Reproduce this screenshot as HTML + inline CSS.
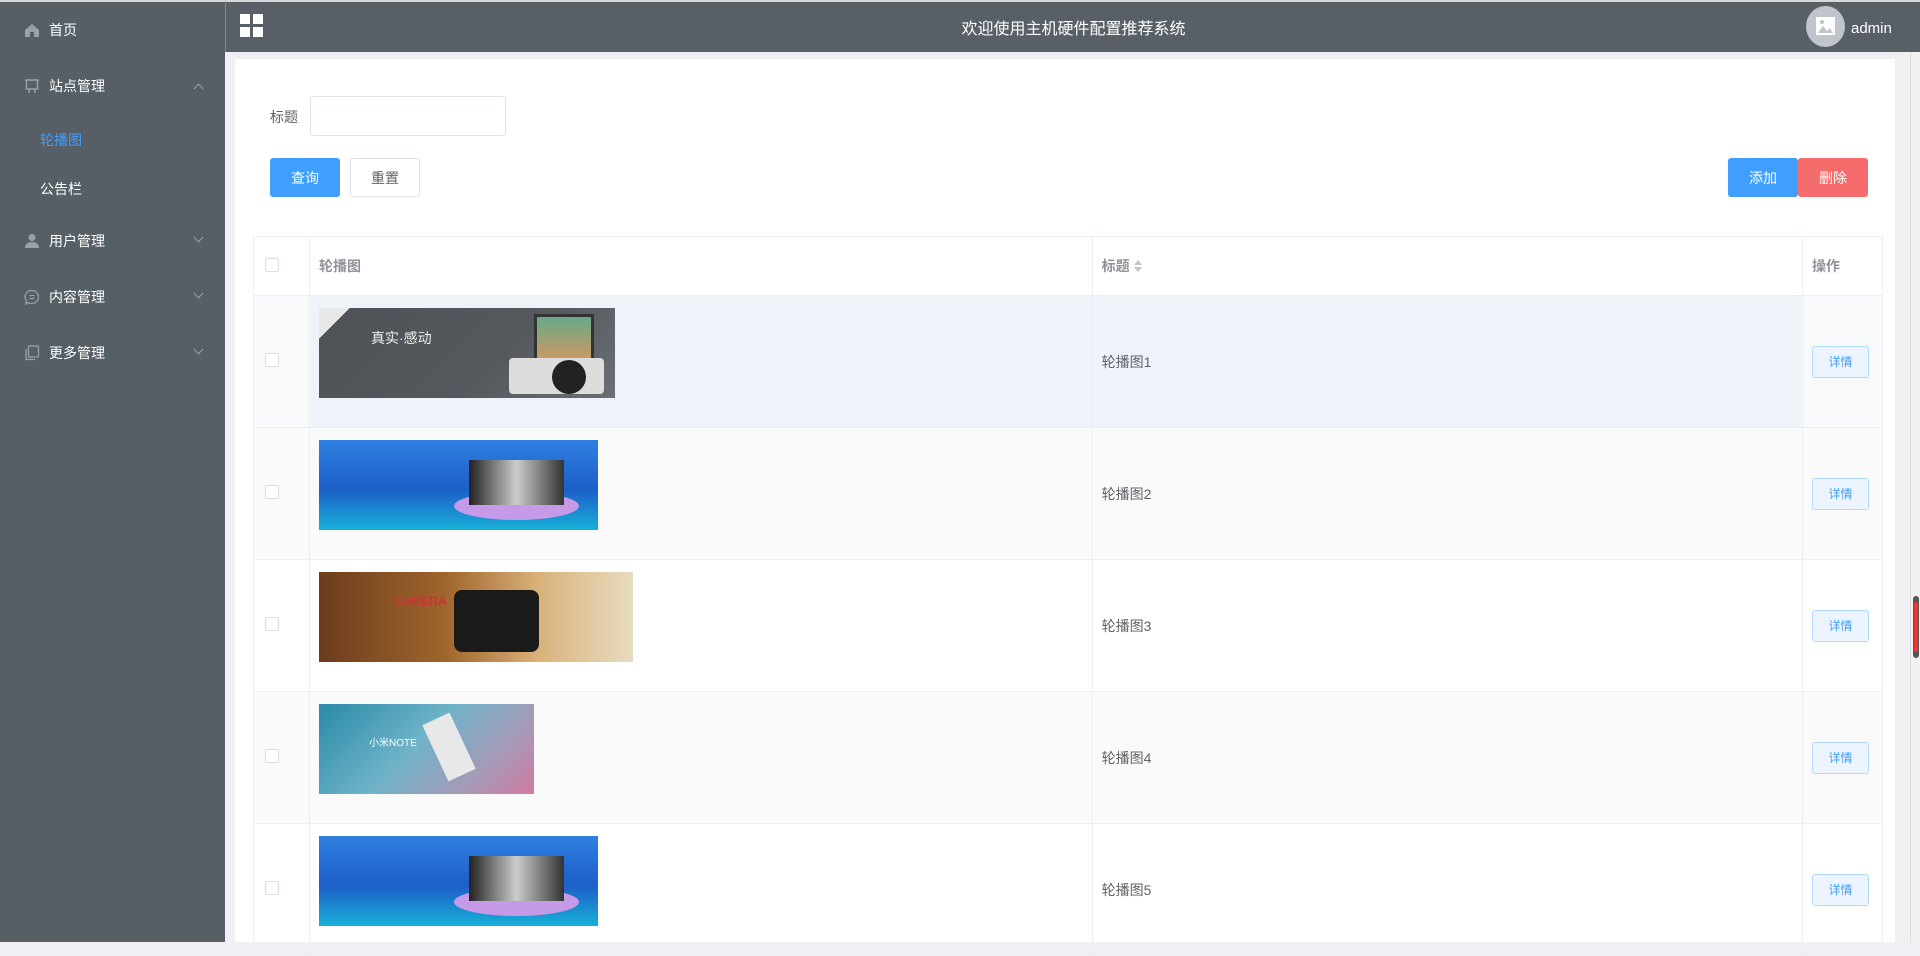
<!DOCTYPE html>
<html><head><meta charset="utf-8"><style>
*{box-sizing:border-box;margin:0;padding:0}
body{width:1920px;height:942px;overflow:hidden;background:#f0f0f4;font-family:"Liberation Sans","Noto Sans CJK SC",sans-serif;font-size:14px;color:#606266;position:relative}
.side{position:absolute;left:0;top:0;width:225px;height:942px;background:#565e66;border-top:2px solid #d8d8d8}
.mi{position:absolute;left:0;width:225px;color:#fff;font-size:14px;display:flex;align-items:center}
.mi .ic{position:absolute;left:24px;width:16px;height:16px}
.mi .t{position:absolute;left:49px}
.mi .ar{position:absolute;left:195px;width:7px;height:7px;border-right:1px solid #9aa0a6;border-bottom:1px solid #9aa0a6}
.head{position:absolute;left:225px;top:0;width:1695px;height:52px;background:#585f66;border-top:2px solid #d8d8d8;border-left:1px solid #888}
.panel{position:absolute;left:235px;top:59px;width:1660px;height:883px;background:#fff}
.btn{position:absolute;height:39px;border-radius:3px;font-size:14px;display:flex;align-items:center;justify-content:center}
table{position:absolute;left:253px;top:236px;border-collapse:collapse;width:1630px}
td,th{border:1px solid #ebeef5;text-align:left;font-weight:normal}
th{height:59px;color:#909399;font-weight:bold;padding-left:9px}
td{height:132px;padding-left:9px}
td.im{vertical-align:top;padding-top:12px}
.cb{width:14px;height:14px;border:1px solid #dcdfe6;border-radius:2px;background:#fff;display:inline-block;margin-left:2px}
.det{width:57px;height:32px;border:1px solid #b3d8ff;background:#ecf5ff;color:#409eff;font-size:12px;border-radius:3px;display:flex;align-items:center;justify-content:center;margin-left:0}
.img{height:90px;display:block}
</style></head><body>
<div class="side">
 <div class="mi" style="top:18px;height:20px"><svg class="ic" viewBox="0 0 16 16"><path d="M1 8L8 2l7 6v7H10V10H6v5H1z" fill="#9aa0a6"/></svg><span class="t">首页</span></div>
 <div class="mi" style="top:74px;height:20px"><svg class="ic" viewBox="0 0 16 16" fill="none" stroke="#9aa0a6" stroke-width="1.4"><path d="M1 2h14M2.5 2v9h11V2M6 11l-1.5 4M10 11l1.5 4"/></svg><span class="t">站点管理</span><span class="ar" style="transform:rotate(-135deg);top:9px"></span></div>
 <div class="mi" style="top:128px;height:20px"><span class="t" style="left:40px;color:#409eff">轮播图</span></div>
 <div class="mi" style="top:177px;height:20px"><span class="t" style="left:40px">公告栏</span></div>
 <div class="mi" style="top:229px;height:20px"><svg class="ic" viewBox="0 0 16 16" fill="#9aa0a6"><circle cx="8" cy="4.5" r="3.5"/><path d="M1 15c0-4 3-6 7-6s7 2 7 6z"/></svg><span class="t">用户管理</span><span class="ar" style="transform:rotate(45deg);top:3px"></span></div>
 <div class="mi" style="top:285px;height:20px"><svg class="ic" viewBox="0 0 16 16" fill="none" stroke="#9aa0a6" stroke-width="1.3"><path d="M8 1.5a6.5 6.5 0 1 1-3.5 12L2 15l.5-3A6.5 6.5 0 0 1 8 1.5zM5.5 6.5h5M5.5 9.5h5"/></svg><span class="t">内容管理</span><span class="ar" style="transform:rotate(45deg);top:3px"></span></div>
 <div class="mi" style="top:341px;height:20px"><svg class="ic" viewBox="0 0 16 16" fill="none" stroke="#9aa0a6" stroke-width="1.3"><rect x="4.5" y="1" width="10" height="11" rx="1"/><path d="M2 4v10.5h9"/></svg><span class="t">更多管理</span><span class="ar" style="transform:rotate(45deg);top:3px"></span></div>
</div>
<div class="head">
 <svg style="position:absolute;left:14px;top:12px" width="23" height="23" viewBox="0 0 23 23" fill="#fff"><rect x="0" y="0" width="10" height="10"/><rect x="13" y="0" width="10" height="10"/><rect x="0" y="13" width="10" height="10"/><rect x="13" y="13" width="10" height="10"/></svg>
 <div style="position:absolute;left:0;width:1695px;top:13px;text-align:center;color:#fff;font-size:16px">欢迎使用主机硬件配置推荐系统</div>
 <div style="position:absolute;left:1580px;top:4px;width:39px;height:41px;border-radius:50%;background:#c0c4cc"><svg style="position:absolute;left:10px;top:11px" width="19" height="18" viewBox="0 0 19 18"><rect x="0" y="0" width="19" height="18" fill="#fff"/><path d="M2 16l5-7 4 5 3-3 3 5z" fill="#c0c4cc"/><circle cx="6" cy="5" r="2" fill="#c0c4cc"/></svg></div>
 <div style="position:absolute;left:1625px;top:18px;color:#fff;font-size:15px">admin</div>
</div>
<div style="position:absolute;left:1910px;top:52px;width:10px;height:890px;background:#f1f1f1;border-left:1px solid #ddd"><div style="position:absolute;left:2px;top:544px;width:6px;height:62px;background:#555;border-radius:3px"></div><div style="position:absolute;left:3px;top:550px;width:4px;height:50px;background:#e33;border-radius:2px"></div></div>
<div class="panel"></div>
<div style="position:absolute;left:270px;top:107px;color:#606266">标题</div>
<div style="position:absolute;left:310px;top:96px;width:196px;height:40px;border:1px solid #dcdfe6;border-radius:4px;background:#fff"></div>
<div class="btn" style="left:270px;top:158px;width:70px;background:#409eff;color:#fff">查询</div>
<div class="btn" style="left:350px;top:158px;width:70px;border:1px solid #dcdfe6;color:#606266;background:#fff">重置</div>
<div class="btn" style="left:1728px;top:158px;width:70px;background:#409eff;color:#fff">添加</div>
<div class="btn" style="left:1798px;top:158px;width:70px;background:#f56c6c;color:#fff">删除</div>
<table>
<tr><th style="width:56px"><span class="cb"></span></th><th style="width:783px">轮播图</th><th style="width:711px">标题 <svg width="10" height="14" viewBox="0 0 10 14" style="vertical-align:-2px"><path d="M5 1l4 5H1z" fill="#c0c4cc"/><path d="M5 13l4-5H1z" fill="#c0c4cc"/></svg></th><th style="width:80px">操作</th></tr>
<tr style="background:#eef3fa"><td style="background:#f8f9fb"><span class="cb"></span></td><td class="im"><div class="img" style="width:296px;background:linear-gradient(135deg,#e8e8e8 0 8%,#4f5358 8%,#55595e 60%,#6b6f74);position:relative"><span style="position:absolute;left:52px;top:20px;color:#eee;font-size:14px">真实·感动</span><div style="position:absolute;left:215px;top:6px;width:60px;height:48px;background:linear-gradient(#6a8,#c96);border:3px solid #333"></div><div style="position:absolute;left:190px;top:50px;width:95px;height:36px;background:#ddd;border-radius:4px"></div><div style="position:absolute;left:233px;top:52px;width:34px;height:34px;border-radius:50%;background:#222"></div></div></td><td>轮播图1</td><td style="background:#f8f9fb"><div class="det">详情</div></td></tr>
<tr style="background:#fafafa"><td><span class="cb"></span></td><td class="im"><div class="img" style="width:279px;background:linear-gradient(180deg,#2f7fe0,#1d5fc8 55%,#17b0d8);position:relative"><div style="position:absolute;left:135px;top:52px;width:125px;height:28px;border-radius:50%;background:#c59ae6"></div><div style="position:absolute;left:150px;top:20px;width:95px;height:45px;background:linear-gradient(90deg,#222,#ccc,#333)"></div></div></td><td>轮播图2</td><td><div class="det">详情</div></td></tr>
<tr><td><span class="cb"></span></td><td class="im"><div class="img" style="width:314px;background:linear-gradient(90deg,#6b3d1c,#a0642c 40%,#d9b27a 70%,#e8dcc0);position:relative"><div style="position:absolute;left:135px;top:18px;width:85px;height:62px;background:#1a1a1a;border-radius:8px"></div><span style="position:absolute;left:75px;top:22px;color:#c33;font-size:12px;font-weight:bold">CAMERA</span></div></td><td>轮播图3</td><td><div class="det">详情</div></td></tr>
<tr style="background:#fafafa"><td><span class="cb"></span></td><td class="im"><div class="img" style="width:215px;background:linear-gradient(135deg,#2a8aa8,#6fb3c8 45%,#a59ab8 75%,#d07aa0);position:relative"><span style="position:absolute;left:50px;top:30px;color:#fff;font-size:10px">小米NOTE</span><div style="position:absolute;left:115px;top:12px;width:30px;height:62px;background:#e8e8e8;transform:rotate(-25deg)"></div></div></td><td>轮播图4</td><td><div class="det">详情</div></td></tr>
<tr><td><span class="cb"></span></td><td class="im"><div class="img" style="width:279px;background:linear-gradient(180deg,#2f7fe0,#1d5fc8 55%,#17b0d8);position:relative"><div style="position:absolute;left:135px;top:52px;width:125px;height:28px;border-radius:50%;background:#c59ae6"></div><div style="position:absolute;left:150px;top:20px;width:95px;height:45px;background:linear-gradient(90deg,#222,#ccc,#333)"></div></div></td><td>轮播图5</td><td><div class="det">详情</div></td></tr>
</table>
</body></html>
